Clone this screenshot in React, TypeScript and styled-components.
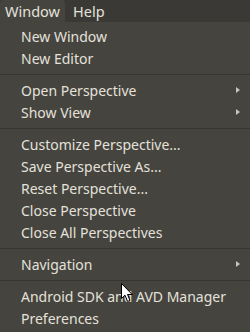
import React from "react";
import styled, { createGlobalStyle } from "styled-components";

const GlobalStyle = createGlobalStyle`
  html, body {
    margin: 0;
    padding: 0;
    background: #45443f;
  }
  body {
    font-family: "Noto Sans", "Open Sans", sans-serif;
  }
`;

type Entry =
  | { kind: "item"; label: string; sub?: boolean }
  | { kind: "sep" };

const entries: Entry[] = [
  { kind: "item", label: "New Window" },
  { kind: "item", label: "New Editor" },
  { kind: "sep" },
  { kind: "item", label: "Open Perspective", sub: true },
  { kind: "item", label: "Show View", sub: true },
  { kind: "sep" },
  { kind: "item", label: "Customize Perspective..." },
  { kind: "item", label: "Save Perspective As..." },
  { kind: "item", label: "Reset Perspective..." },
  { kind: "item", label: "Close Perspective" },
  { kind: "item", label: "Close All Perspectives" },
  { kind: "sep" },
  { kind: "item", label: "Navigation", sub: true },
  { kind: "sep" },
  { kind: "item", label: "Android SDK and AVD Manager" },
  { kind: "item", label: "Preferences" },
];

const Screen = styled.div`
  position: relative;
  width: 250px;
  height: 332px;
  overflow: hidden;
  background: #45443f;
`;

const MenuBar = styled.div`
  display: flex;
  align-items: stretch;
  height: 22px;
  background: #3a3935;
`;

const BarItem = styled.div<{ $open?: boolean }>`
  display: flex;
  align-items: center;
  width: ${(p) => (p.$open ? "60px" : "auto")};
  padding: 0 0 0 ${(p) => (p.$open ? "5px" : "8px")};
  font-size: 14.5px;
  color: #e4e1da;
  background: ${(p) => (p.$open ? "#45443f" : "transparent")};
  border-radius: 3px 3px 0 0;
`;

const Dropdown = styled.div`
  display: flex;
  flex-direction: column;
  padding-top: 3px;
`;

const Row = styled.div`
  display: flex;
  align-items: center;
  justify-content: space-between;
  height: 22px;
  padding: 0 10px 0 21px;
  font-size: 14px;
  color: #e4e1da;
  white-space: nowrap;
`;

const Separator = styled.div`
  height: 10px;
  display: flex;
  align-items: center;

  &::after {
    content: "";
    flex: 1;
    height: 1px;
    background: #37362f;
  }
`;

const Arrow = () => (
  <svg width="4" height="6" viewBox="0 0 4 6">
    <path d="M0 0 L4 3 L0 6 Z" fill="#c8c5bd" />
  </svg>
);

const Cursor = styled.svg`
  position: absolute;
  left: 121px;
  top: 283px;
`;

export default function App() {
  return (
    <Screen>
      <GlobalStyle />
      <MenuBar>
        <BarItem $open>Window</BarItem>
        <BarItem>Help</BarItem>
      </MenuBar>
      <Dropdown>
        {entries.map((e, i) =>
          e.kind === "sep" ? (
            <Separator key={i} />
          ) : (
            <Row key={i}>
              <span>{e.label}</span>
              {e.sub && <Arrow />}
            </Row>
          )
        )}
      </Dropdown>
      <Cursor width="13" height="20" viewBox="0 0 13 20">
        <path
          d="M0.5 0.5 L0.5 15.5 L4 12.2 L6.6 18.5 L9 17.5 L6.5 11.5 L11.2 11.5 Z"
          fill="#ffffff"
          stroke="#000000"
          strokeWidth="1"
          strokeLinejoin="miter"
        />
      </Cursor>
    </Screen>
  );
}
